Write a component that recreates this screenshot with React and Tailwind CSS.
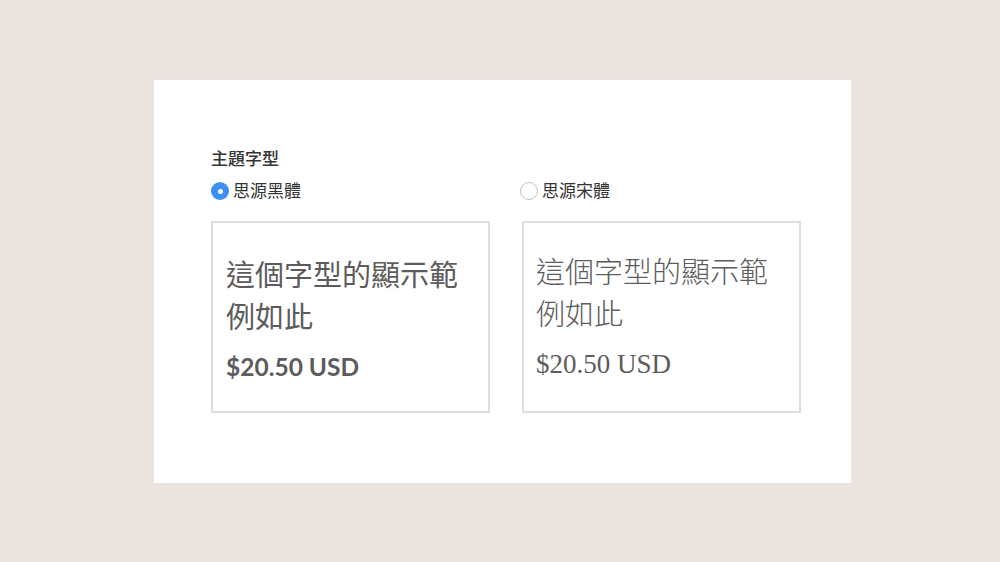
export default function App() {
  const cjk = { fontFamily: 'Lato, "Noto Sans CJK TC", sans-serif' };
  return (
    <div className="w-[1000px] h-[562px] bg-[#ebe4de] pt-[80px] pl-[154px]" style={cjk}>
      <div className="w-[697px] h-[403px] bg-white pt-[68px] pl-[57px] pr-[50px]">
        <div className="text-[17px] font-medium text-[#333] leading-[22px]">主題字型</div>
        <div className="flex gap-[32px] mt-[10px]">
          <div className="w-[279px]">
            <label className="flex items-center gap-[4px] h-[22px] text-[17px] text-[#333]">
              <span className="w-[18px] h-[18px] rounded-full bg-[#3b8ff5] flex items-center justify-center">
                <span className="w-[5px] h-[5px] rounded-full bg-white"></span>
              </span>
              思源黑體
            </label>
            <div className="mt-[19px] h-[192px] border-2 border-[#dedede] pl-[13px] pt-[31px] text-[#5c5c5c]">
              <div className="text-[29px] leading-[42px]">這個字型的顯示範<br />例如此</div>
              <div className="text-[24.5px] font-bold leading-[32px] mt-[13px]" style={{ fontFamily: 'Lato, sans-serif' }}>$20.50 USD</div>
            </div>
          </div>
          <div className="w-[279px]">
            <label className="flex items-center gap-[4px] h-[22px] text-[17px] text-[#333] -ml-[2px]">
              <span className="w-[18px] h-[18px] rounded-full border border-[#c2c2c2] bg-white"></span>
              思源宋體
            </label>
            <div className="mt-[19px] h-[192px] border-2 border-[#dedede] pl-[12px] pt-[29px] text-[#5c5c5c]">
              <div className="text-[29px] leading-[42px] font-light" style={{ fontFamily: '"Liberation Serif", "Noto Sans CJK TC", serif' }}>這個字型的顯示範<br />例如此</div>
              <div className="text-[27px] leading-[32px] mt-[12px]" style={{ fontFamily: '"Liberation Serif", serif' }}>$20.50 USD</div>
            </div>
          </div>
        </div>
      </div>
    </div>
  );
}
